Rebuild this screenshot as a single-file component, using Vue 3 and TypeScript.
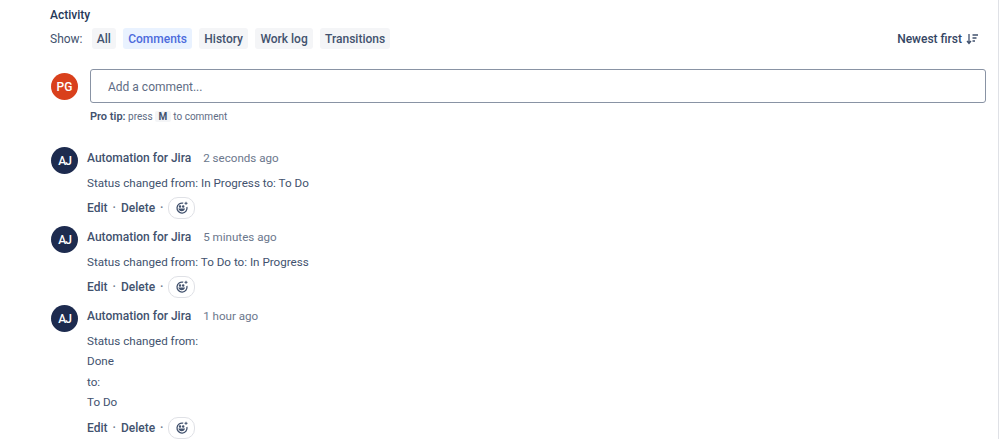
<script setup lang="ts">
interface Comment {
  when: string
  lines: string[]
}

const filters = ['All', 'Comments', 'History', 'Work log', 'Transitions']

const comments: Comment[] = [
  { when: '2 seconds ago', lines: ['Status changed from: In Progress to: To Do'] },
  { when: '5 minutes ago', lines: ['Status changed from: To Do to: In Progress'] },
  { when: '1 hour ago', lines: ['Status changed from:', 'Done', 'to:', 'To Do'] },
]
</script>

<template>
  <div class="page">
    <h2 class="title">Activity</h2>
    <div class="toolbar">
      <span class="show">Show:</span>
      <button v-for="f in filters" :key="f" class="chip" :class="{ active: f === 'Comments' }">{{ f }}</button>
      <span class="sort">
        Newest first
        <svg width="12" height="12" viewBox="0 0 12 12" fill="none" stroke="#42526e" stroke-width="1.3">
          <path d="M3 1v9M1 8l2 2.4L5 8" />
          <path d="M6.5 2H12M6.5 5h4M6.5 8H9" />
        </svg>
      </span>
    </div>

    <div class="editor">
      <div class="avatar red">PG</div>
      <div class="editor-main">
        <div class="input">Add a comment...</div>
        <div class="tip"><b>Pro tip:</b> press <kbd>M</kbd> to comment</div>
      </div>
    </div>

    <div v-for="c in comments" :key="c.when" class="comment">
      <div class="avatar navy">AJ</div>
      <div class="body">
        <div class="head"><span class="author">Automation for Jira</span><span class="when">{{ c.when }}</span></div>
        <p v-for="(l, i) in c.lines" :key="i" class="line">{{ l }}</p>
        <div class="actions">
          <span>Edit</span><i>·</i><span>Delete</span><i>·</i>
          <span class="react">
            <svg width="14" height="14" viewBox="0 0 14 14" fill="none" stroke="#42526e" stroke-width="1.3">
              <path d="M8.2 2.2A5 5 0 1 0 11.9 6" />
              <path d="M4.3 8.2c.8 1.9 4 1.9 4.8 0z" fill="#42526e" />
              <circle cx="5" cy="5.6" r=".6" fill="#42526e" />
              <circle cx="8.2" cy="5.6" r=".6" fill="#42526e" />
              <path d="M11 .8v3M9.5 2.3h3" stroke-width="1" />
            </svg>
          </span>
        </div>
      </div>
    </div>
  </div>
</template>

<style scoped>
.page {
  width: 999px;
  height: 439px;
  box-sizing: border-box;
  overflow: hidden;
  padding: 8px 12px 0 50px;
  border-right: 1px solid #dfe1e6;
  font-family: Roboto, "Noto Sans", sans-serif;
  font-size: 12px;
  color: #253858;
  background: #fff;
}
.title {
  margin: 0;
  font-size: 12px;
  line-height: 14px;
  font-weight: 500;
}
.toolbar {
  display: flex;
  align-items: center;
  height: 21px;
  margin-top: 6px;
}
.show {
  color: #42526e;
  margin-right: 9px;
}
.chip {
  border: 0;
  border-radius: 3px;
  height: 21px;
  padding: 0 5.2px;
  margin-right: 7px;
  background: #f4f5f7;
  color: #42526e;
  font: 500 12px Roboto, sans-serif;
}
.chip.active {
  background: #e9f2ff;
  color: #4c6bdc;
}
.sort {
  margin-left: auto;
  display: flex;
  align-items: center;
  gap: 4px;
  margin-right: 8px;
  font-weight: 500;
  color: #344563;
}
.editor {
  display: flex;
  margin-top: 20px;
}
.avatar {
  width: 27px;
  height: 27px;
  border-radius: 50%;
  flex: none;
  display: flex;
  align-items: center;
  justify-content: center;
  color: #fff;
  font-size: 12px;
  font-weight: 500;
  margin: 4px 0 0 1px;
}
.red { background: #d9401c; }
.navy {
  background: #1d2b4f;
  letter-spacing: -1px;
}
.editor-main {
  flex: 1;
  margin-left: 12px;
}
.input {
  height: 34px;
  box-sizing: border-box;
  border: 1px solid #8993a4;
  border-radius: 3px;
  padding-left: 17px;
  line-height: 35px;
  color: #5e6c84;
}
.tip {
  margin-top: 6px;
  font-size: 10px;
  line-height: 16px;
  color: #5e6c84;
}
.tip b {
  color: #42526e;
  font-size: 11px;
  font-weight: 600;
}
kbd {
  display: inline-block;
  padding: 0 3.5px;
  background: #f4f5f7;
  border-radius: 2px;
  font: 700 10px Roboto, sans-serif;
  color: #42526e;
}
.comment {
  display: flex;
  margin-top: 22px;
}
.comment + .comment {
  margin-top: 8px;
}
.comment .avatar {
  margin-top: 0;
}
.body {
  margin-left: 9px;
  padding-top: 3px;
}
.head {
  line-height: 17px;
}
.author {
  font-weight: 500;
  color: #42526e;
  margin-right: 12px;
}
.when {
  color: #6b778c;
  font-size: 11.6px;
}
.line {
  margin: 7.5px 0 0;
  font-size: 11.65px;
  line-height: 16px;
  color: #42526e;
}
.line + .line {
  margin-top: 4.5px;
}
.actions {
  display: flex;
  align-items: center;
  height: 20px;
  margin-top: 7.5px;
  color: #42526e;
  font-weight: 500;
}
.actions i {
  font-style: normal;
  margin: 0 5px;
  color: #6b778c;
}
.react {
  display: flex;
  align-items: center;
  justify-content: center;
  width: 25px;
  height: 20px;
  border: 1px solid #dfe1e6;
  border-radius: 10px;
}
</style>
